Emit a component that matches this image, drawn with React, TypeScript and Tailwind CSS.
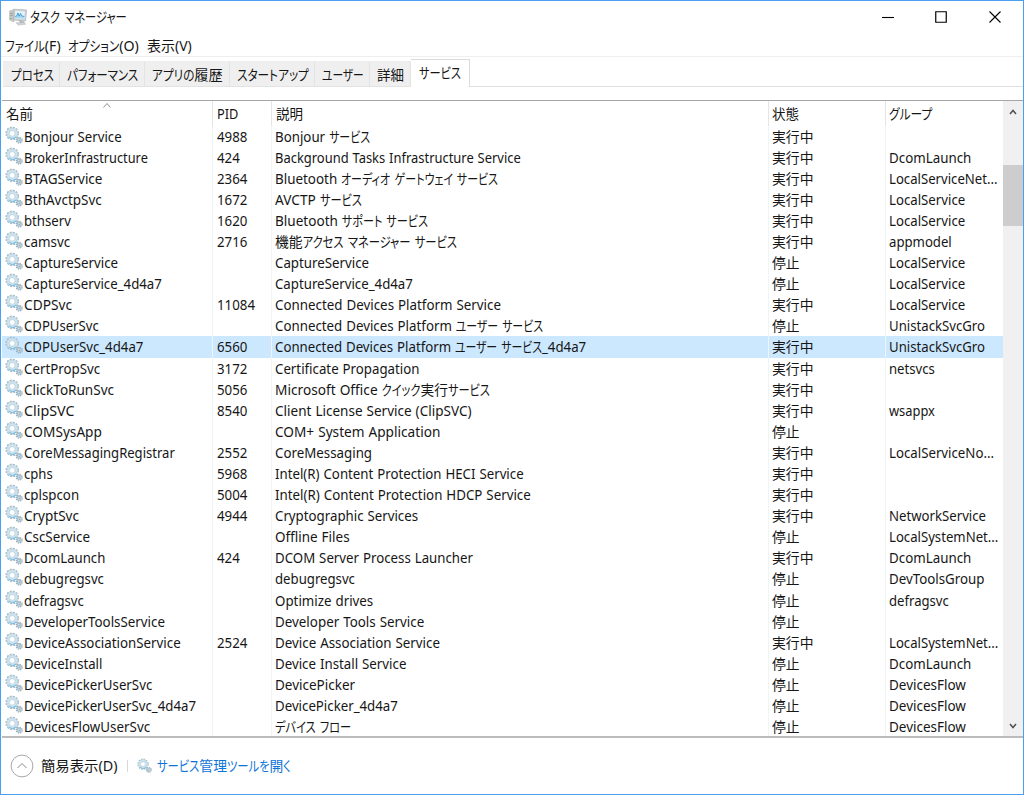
import { Fragment, useLayoutEffect, useRef } from 'react';

const KANA = /([\u3040-\u30ff]+)/;
const KANA_RATIO = 0.82;

function Kana({ text }: { text: string }) {
  const ref = useRef<HTMLSpanElement>(null);
  useLayoutEffect(() => {
    const el = ref.current;
    if (el) {
      el.style.width = '';
      const natural = el.getBoundingClientRect().width;
      el.style.width = `${natural * KANA_RATIO}px`;
      el.style.transform = `scaleX(${KANA_RATIO})`;
    }
  }, [text]);
  return (
    <span ref={ref} className="inline-block origin-left [font-feature-settings:'palt']">
      {text}
    </span>
  );
}

function Fit({ text, w }: { text: string; w?: number }) {
  const ref = useRef<HTMLSpanElement>(null);
  useLayoutEffect(() => {
    const el = ref.current;
    if (el && w) {
      el.style.transform = `scaleX(${w / el.offsetWidth})`;
    }
  }, [w, text]);
  return (
    <span ref={ref} className="inline-block origin-left whitespace-pre [word-spacing:0.5px]">
      {text.split(KANA).map((part, i) =>
        KANA.test(part) ? <Kana key={i} text={part} /> : <Fragment key={i}>{part}</Fragment>,
      )}
    </span>
  );
}

function Gears({ className }: { className: string }) {
  return (
    <svg viewBox="0 0 18 18" className={className} fill="none">
      <circle cx="7.2" cy="7.4" r="6" stroke="#a3b8c5" strokeWidth="1.6" strokeDasharray="1.9 1.24" />
      <circle cx="7.2" cy="7.4" r="4.300" stroke="#cfe4ef" strokeWidth="2.800" />
      <circle cx="7.2" cy="7.4" r="5.400" stroke="#b0cbd9" strokeWidth=".6" />
      <circle cx="7.2" cy="7.4" r="2.900" fill="#fff" stroke="#a9c6d6" strokeWidth=".7" />
      <path d="M4 10.900a5 5 0 0 0 7 .2" stroke="#7fc0e2" strokeWidth="1.300" />
      <circle cx="14.200" cy="14.200" r="2.900" stroke="#93a8b6" strokeWidth="1.300" strokeDasharray="1.3 .98" />
      <circle cx="14.200" cy="14.200" r="1.900" fill="#e7f1f6" stroke="#a8c0ce" strokeWidth="1.400" />
      <circle cx="14.200" cy="14.200" r=".7" fill="#7b92a1" />
    </svg>
  );
}

function AppIcon() {
  return (
    <svg viewBox="0 0 18 18" className="size-[18px]">
      <path d="M.5 3 5 1.500v12.500L.5 12z" fill="#c3c7c5" stroke="#b0b4b2" strokeWidth=".5" />
      <path d="M1.200 5.500h2.500M1.200 7.500h2.500" stroke="#8a918c" strokeWidth=".7" />
      <path d="M1.200 10.500h1.500" stroke="#6fae78" strokeWidth="1" />
      <path d="M4.800 1.200 17.500 2l-1 11-11.700-1z" fill="#cfd2d3" stroke="#aeb2b4" strokeWidth=".7" />
      <path d="m6.200 2.800 9.700.6-.7 7.900-9-.7z" fill="#e3f3fb" />
      <path d="m6.200 8.500 1.500-.4 1.200-3.200 1.300 3.300 1.300-2.900 1.200 2.700 2.600.4-.2 2.300-8.900-.6z" fill="#a9d8f0" />
      <path d="m6.200 8.500 1.500-.4 1.200-3.200 1.300 3.300 1.300-2.900 1.200 2.700 2.600.4" fill="none" stroke="#3c9bd2" strokeWidth=".9" />
      <path d="m10.500 12.500 4 .4.800 2.100h-5z" fill="#b4b8ba" />
      <path d="M7 14.700 15.500 14.500l1.200 1.800-7.500.8z" fill="#d0d3d5" stroke="#b0b4b6" strokeWidth=".5" />
    </svg>
  );
}

type Row = [name: string, nw: number, pid: string, desc: string, dw: number, running: boolean, group: string, gw: number];

const rows: Row[] = [
  ['Bonjour Service', 98, '4988', 'Bonjour サービス', 95, true, '', 0],
  ['BrokerInfrastructure', 124, '424', 'Background Tasks Infrastructure Service', 246, true, 'DcomLaunch', 82],
  ['BTAGService', 78, '2364', 'Bluetooth オーディオ ゲートウェイ サービス', 223, true, 'LocalServiceNet...', 109],
  ['BthAvctpSvc', 78, '1672', 'AVCTP サービス', 87, true, 'LocalService', 76.5],
  ['bthserv', 47, '1620', 'Bluetooth サポート サービス', 153, true, 'LocalService', 76.5],
  ['camsvc', 46, '2716', '機能アクセス マネージャー サービス', 182, true, 'appmodel', 63],
  ['CaptureService', 94, '', 'CaptureService', 94, false, 'LocalService', 76.5],
  ['CaptureService_4d4a7', 138, '', 'CaptureService_4d4a7', 138, false, 'LocalService', 76.5],
  ['CDPSvc', 48, '11084', 'Connected Devices Platform Service', 226, true, 'LocalService', 76.5],
  ['CDPUserSvc', 75, '', 'Connected Devices Platform ユーザー サービス', 268, false, 'UnistackSvcGro', 96],
  ['CDPUserSvc_4d4a7', 119, '6560', 'Connected Devices Platform ユーザー サービス_4d4a7', 311.5, true, 'UnistackSvcGro', 96],
  ['CertPropSvc', 76, '3172', 'Certificate Propagation', 144, true, 'netsvcs', 46],
  ['ClickToRunSvc', 90, '5056', 'Microsoft Office クイック実行サービス', 215, true, '', 0],
  ['ClipSVC', 50, '8540', 'Client License Service (ClipSVC)', 197, true, 'wsappx', 46],
  ['COMSysApp', 78, '', 'COM+ System Application', 165.5, false, '', 0],
  ['CoreMessagingRegistrar', 151, '2552', 'CoreMessaging', 97, true, 'LocalServiceNo...', 105],
  ['cphs', 29, '5968', 'Intel(R) Content Protection HECI Service', 249, true, '', 0],
  ['cplspcon', 55, '5004', 'Intel(R) Content Protection HDCP Service', 256, true, '', 0],
  ['CryptSvc', 55, '4944', 'Cryptographic Services', 143, true, 'NetworkService', 97],
  ['CscService', 66, '', 'Offline Files', 75, false, 'LocalSystemNet...', 109],
  ['DcomLaunch', 81, '424', 'DCOM Server Process Launcher', 198, true, 'DcomLaunch', 82],
  ['debugregsvc', 80, '', 'debugregsvc', 80, false, 'DevToolsGroup', 95],
  ['defragsvc', 60, '', 'Optimize drives', 98, false, 'defragsvc', 60],
  ['DeveloperToolsService', 141, '', 'Developer Tools Service', 149, false, '', 0],
  ['DeviceAssociationService', 157, '2524', 'Device Association Service', 165, true, 'LocalSystemNet...', 109],
  ['DeviceInstall', 78, '', 'Device Install Service', 131, false, 'DcomLaunch', 82],
  ['DevicePickerUserSvc', 128, '', 'DevicePicker', 80, false, 'DevicesFlow', 77],
  ['DevicePickerUserSvc_4d4a7', 172, '', 'DevicePicker_4d4a7', 123, false, 'DevicesFlow', 77],
  ['DevicesFlowUserSvc', 126, '', 'デバイス フロー', 76, false, 'DevicesFlow', 77],
];

const tabs: [string, string, number][] = [
  ['プロセス', 'w-[57px] pl-[8px]', 43],
  ['パフォーマンス', 'w-[85px] pl-[7px]', 71],
  ['アプリの履歴', 'w-[85px] pl-[7px]', 71],
  ['スタートアップ', 'w-[85px] pl-[7px]', 72],
  ['ユーザー', 'w-[55px] pl-[7px]', 42],
  ['詳細', 'w-[41px] pl-[7px]', 27],
];

const COLS = 'grid grid-cols-[211px_59px_497px_117px_117px]';

export default function App() {
  return (
    <div className="flex h-[795px] w-[1024px] flex-col overflow-hidden border border-[#4b9ff0] bg-white font-['Noto_Sans','Noto_Sans_CJK_JP',sans-serif] text-[14px] text-[#161616]">
      <header className="flex h-[31px] shrink-0 items-center pl-2">
        <AppIcon />
        <h1 className="ml-[3px] leading-[20px]">
          <Fit text="タスク マネージャー" w={97} />
        </h1>
        <div className="ml-auto flex items-center text-black">
          <svg viewBox="0 0 12 12" className="mr-[41px] size-3"><path d="M0 6.500h12" stroke="currentColor" strokeWidth="1.100" /></svg>
          <svg viewBox="0 0 12 12" className="mr-[42px] size-3"><path d="M.75.75h10.500v10.500H.75z" fill="none" stroke="currentColor" strokeWidth="1.200" /></svg>
          <svg viewBox="0 0 12 12" className="mr-[22px] size-3"><path d="m.5.5 11 11m0-11-11 11" stroke="currentColor" strokeWidth="1.100" /></svg>
        </div>
      </header>

      <nav className="grid h-[25px] shrink-0 grid-cols-[63px_79px_1fr] justify-items-start border-b border-[#efefef] pl-[4px] leading-[27px]">
        <Fit text="ファイル(F)" w={56} />
        <Fit text="オプション(O)" w={71} />
        <Fit text="表示(V)" w={45} />
      </nav>

      <div className="flex h-[30px] shrink-0 items-end pl-[2px]">
        {tabs.map(([label, cls, w]) => (
          <div key={label} className={`h-[26px] shrink-0 overflow-hidden whitespace-nowrap border-r border-b border-t border-[#e3e3e3] border-t-[#ededed] bg-[#efefef] leading-[25px] ${cls}`}>
            <Fit text={label} w={w} />
          </div>
        ))}
        <div className="h-[28px] w-[59px] shrink-0 whitespace-nowrap border-r border-t border-[#dcdcdc] bg-white pl-[8px] leading-[26px]">
          <Fit text="サービス" w={42} />
        </div>
        <div className="flex-1 self-stretch border-b border-[#e0e0e0]" />
      </div>

      <main className="ml-px mt-[13px] flex h-[638px] shrink-0 border-t border-b-2 border-t-[#a6a6a6] border-b-[#bcbcbc]">
        <div className="w-[1001px] shrink-0 overflow-hidden">
          <div className={`${COLS} h-[24.5px] leading-[26px]`}>
            <div className="relative border-r border-[#e5e5e5] pl-1">
              <Fit text="名前" w={27} />
              <svg viewBox="0 0 8 5" className="absolute top-[2px] left-[101px] h-[5px] w-2"><path d="m.5 4.500 3.500-4 3.500 4" fill="none" stroke="#777" strokeWidth=".8" /></svg>
            </div>
            <div className="border-r border-[#e5e5e5] pl-1"><Fit text="PID" w={21} /></div>
            <div className="border-r border-[#e5e5e5] pl-1"><Fit text="説明" w={27} /></div>
            <div className="border-r border-[#e5e5e5] pl-[3px]"><Fit text="状態" w={27} /></div>
            <div className="pl-[3px]"><Fit text="グループ" w={43} /></div>
          </div>
          {rows.map(([name, nw, pid, desc, dw, running, group, gw], i) => (
            <div key={name} className={`${COLS} h-[21.1px] whitespace-nowrap leading-[21px] ${i === 10 ? 'bg-[#cce8ff]' : ''}`}>
              <div className="flex border-r border-[#eff4f8] pl-[3px]">
                <Gears className="mr-[1px] size-[18px] shrink-0" />
                <Fit text={name} w={nw} />
              </div>
              <div className="border-r border-[#eff4f8] pl-[3.500px]">{pid && <Fit text={pid} w={pid.length * 7.6} />}</div>
              <div className="border-r border-[#eff4f8] pl-[3px]"><Fit text={desc} w={dw} /></div>
              <div className="border-r border-[#eff4f8] pl-[3px]"><Fit text={running ? '実行中' : '停止'} w={running ? 41.5 : 27.5} /></div>
              <div className="pl-[3.300px]">{group && <Fit text={group} w={gw} />}</div>
            </div>
          ))}
        </div>
        <div className="flex flex-1 flex-col items-center bg-[#f0f0f0]">
          <svg viewBox="0 0 8 6" className="mt-2 h-[6px] w-2 shrink-0"><path d="m1 5 3-3.500L7 5" fill="none" stroke="#505050" strokeWidth="1.500" /></svg>
          <div className="mt-[50px] h-[61px] w-full bg-[#cdcdcd]" />
          <svg viewBox="0 0 8 6" className="mt-auto mb-[7px] h-[6px] w-2 shrink-0"><path d="m1 1 3 3.500L7 1" fill="none" stroke="#505050" strokeWidth="1.500" /></svg>
        </div>
      </main>

      <footer className="flex flex-1 items-center pl-[9px]">
        <svg viewBox="0 0 24 24" className="size-6" fill="none"><circle cx="12" cy="12" r="10.900" stroke="#a8a8a8" /><path d="m7.500 14 4.500-4.500 4.500 4.500" stroke="#8a8a8a" /></svg>
        <div className="ml-[7px] w-[86px] whitespace-nowrap pb-px"><Fit text="簡易表示(D)" w={77} /></div>
        <div className="h-3 w-px bg-[#d8d8d8]" />
        <Gears className="mb-px ml-[9px] size-[15px]" />
        <div className="ml-[5px] whitespace-nowrap pb-[2px] text-[#0f74d8]"><Fit text="サービス管理ツールを開く" w={134} /></div>
      </footer>
    </div>
  );
}
